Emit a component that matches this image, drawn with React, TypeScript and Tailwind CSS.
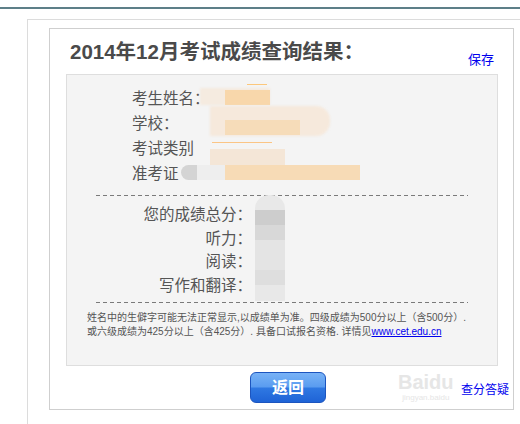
import React from 'react'

const cn = '"Liberation Sans", "Noto Sans CJK SC", sans-serif'

function Dashed({ className = '' }: { className?: string }) {
  return (
    <div
      className={`h-px w-[372px] ml-[29px] bg-[repeating-linear-gradient(to_right,#7a7a7a_0,#7a7a7a_4px,transparent_4px,transparent_7px)] ${className}`}
    />
  )
}

export default function App() {
  const info = ['考生姓名：', '学校：', '考试类别', '准考证']
  const scores = ['您的成绩总分：', '听力：', '阅读：', '写作和翻译：']

  return (
    <div className="relative w-[520px] h-[424px] overflow-hidden bg-white" style={{ fontFamily: cn }}>
      {/* top rule */}
      <div className="mt-[7px] h-[2px] bg-[#5d7f88]" />

      {/* outer frame */}
      <div className="mt-[10px] ml-[27px] h-[420px] border-l border-t border-[#dcdcdc] pt-[8px] pl-[21px]">
        {/* inner box */}
        <div className="relative w-[465px] h-[382px] border border-[#cfcfcf]">
          {/* header */}
          <div className="flex h-[45px] items-start justify-between pl-[20px] pr-[19px]">
            <h1 className="mt-[10px] text-[20.5px] font-bold leading-[25px] text-[#4a4a4a]">
              2014年12月考试成绩查询结果：
            </h1>
            <a className="mt-[24px] text-[13px] leading-[14px] text-[#0000ee]">保存</a>
          </div>

          {/* result panel */}
          <div className="relative ml-[16px] w-[432px] h-[292px] border border-[#dedede] bg-[#f4f4f4] text-[#555]">
            {/* student info */}
            <div className="pt-[11px] pl-[65px] text-[15.5px] leading-[25px]">
              {info.map((t) => (
                <div key={t}>{t}</div>
              ))}
            </div>

            <Dashed className="mt-[9px]" />

            {/* scores */}
            <div className="mt-[7px] w-[185px] text-right text-[15.5px] leading-[23.5px]">
              {scores.map((t) => (
                <div key={t}>{t}</div>
              ))}
            </div>

            <Dashed className="mt-[5px]" />

            {/* note */}
            <p className="mt-[8px] ml-[20px] whitespace-nowrap text-[10px] leading-[14px] text-[#555]">
              姓名中的生僻字可能无法正常显示,以成绩单为准。四级成绩为500分以上（含500分）.
              <br />
              或六级成绩为425分以上（含425分）. 具备口试报名资格. 详情见
              <a className="text-[#0000ee] underline">www.cet.edu.cn</a>
            </p>

            {/* redacted values */}
            <div className="absolute left-[133px] top-[13px] h-[17px] w-[70px] bg-[#f5ebe0] blur-[1px]" />
            <div className="absolute left-[158px] top-[15px] h-[15px] w-[45px] bg-[#f8d7ab]" />
            <div className="absolute left-[180px] top-[9px] h-[1px] w-[20px] bg-[#ffb347] opacity-70" />
            <div className="absolute left-[143px] top-[31px] h-[30px] w-[120px] rounded-r-[14px] bg-[#f6e9dc] blur-[1px]" />
            <div className="absolute left-[158px] top-[45px] h-[15px] w-[75px] bg-[#f6dcb9]" />
            <div className="absolute left-[145px] top-[67px] h-[1px] w-[60px] bg-[#ffa53a] opacity-60" />
            <div className="absolute left-[143px] top-[74px] h-[31px] w-[75px] bg-[#f4e6d7]" />
            <div className="absolute left-[114px] top-[90px] h-[15px] w-[16px] rounded-l-full bg-[#d4d4d4]" />
            <div className="absolute left-[130px] top-[90px] h-[15px] w-[28px] bg-[#eeeeee]" />
            <div className="absolute left-[158px] top-[90px] h-[15px] w-[135px] bg-[#f7dbb6]" />

            <div className="absolute left-[188px] top-[120px] h-[106px] w-[30px] overflow-hidden rounded-t-[14px] bg-[#e8e8e8]">
              <div className="mt-[15px] h-[15px] bg-[#cdcdcd]" />
              <div className="h-[15px] bg-[#d8d8d8]" />
              <div className="h-[30px] bg-[#e4e4e4]" />
              <div className="h-[15px] bg-[#dedede]" />
            </div>
          </div>

          {/* footer */}
          <div className="mt-[6px] flex h-[31px] items-start pl-[200px] pr-[4px]">
            <button className="h-[31px] w-[76px] rounded-[6px] border border-[#1c55bf] bg-[linear-gradient(#78b2f6_0%,#5a9cf0_48%,#2f78e2_52%,#1f63d6_100%)] text-[16px] font-bold leading-[29px] text-white">
              返回
            </button>
            <a className="ml-auto mt-[11px] text-[12px] leading-[14px] text-[#0000ee]">查分答疑</a>
          </div>

          {/* watermark */}
          <div className="pointer-events-none absolute left-[348px] top-[342px] text-center text-[#e6e6e6]">
            <div className="text-[20px] font-bold leading-[22px]">Baidu</div>
            <div className="text-[8px] leading-[10px]">jingyan.baidu</div>
          </div>
        </div>
      </div>
    </div>
  )
}
